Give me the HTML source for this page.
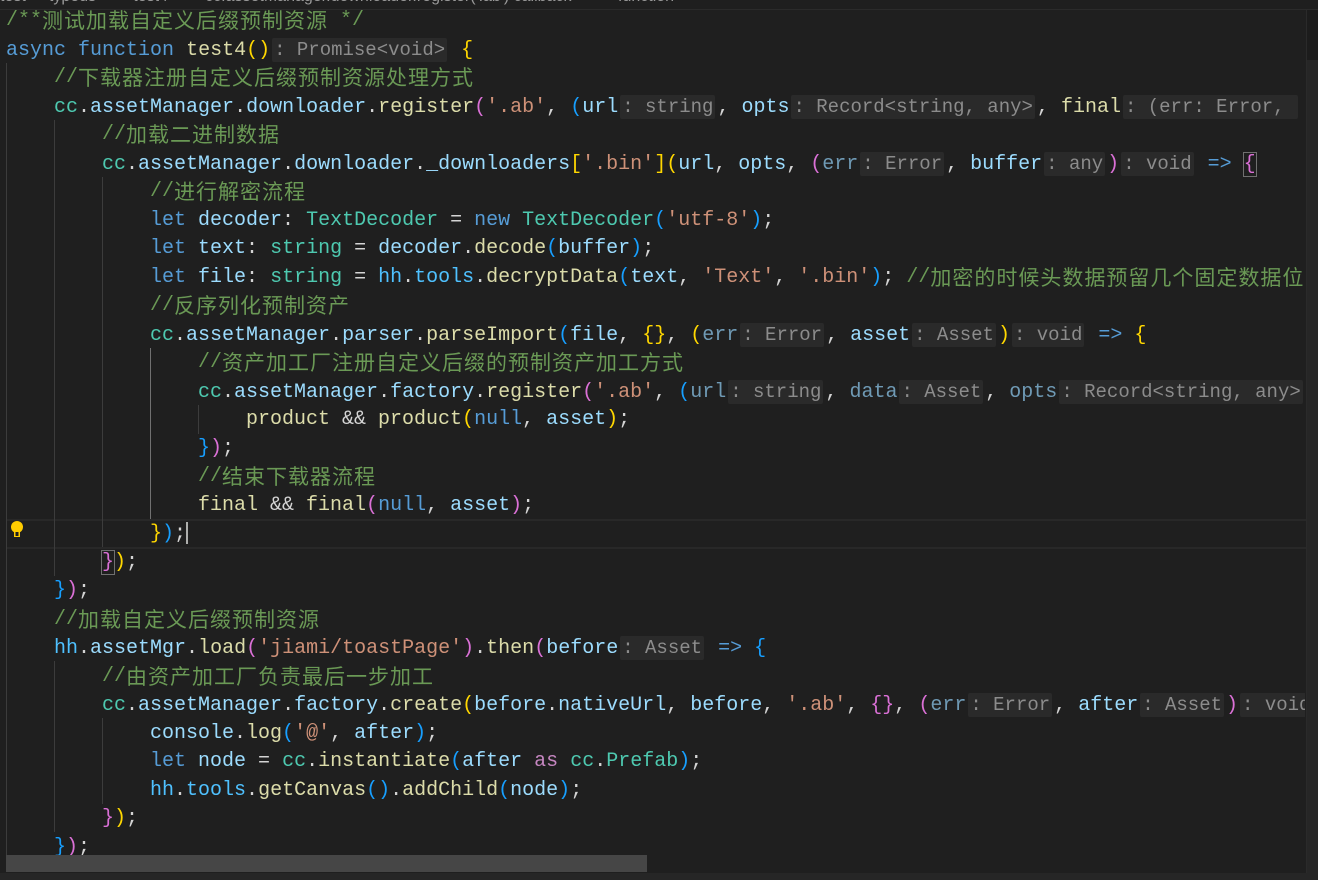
<!DOCTYPE html>
<html><head><meta charset="utf-8"><style>
html,body{margin:0;padding:0;background:#1f1f1f;width:1318px;height:880px;overflow:hidden}
#top{position:absolute;left:0;top:0;width:1318px;height:9px;background:#1f1f1f;overflow:hidden;border-bottom:1px solid #2b2b2b}
#top div{position:absolute;top:-12px;left:0;font:16px "Liberation Sans",sans-serif;color:#9a9a9a;white-space:pre}
#ed{position:absolute;left:0;top:9px;width:1305px;height:846px;overflow:hidden}
.l{position:absolute;left:6px;height:28.5px;line-height:28.5px;white-space:pre;font:20px "Liberation Mono","Noto Sans CJK SC",monospace;color:#d4d4d4}
.l span{line-height:0}
.c{color:#6a9955}
.z{font-family:"Noto Sans CJK SC",sans-serif;font-size:21px;letter-spacing:1px;position:relative;top:3px}
.k{color:#569cd6}.f{color:#dcdcaa}.v{color:#9cdcfe}.t{color:#4ec9b0}.s{color:#ce9178}.cn{color:#4fc1ff}.p{color:#c586c0}
.u{color:#6f9ab5}
.y{color:#ffd700}.m{color:#da70d6}.b{color:#179fff}
.l .h{display:inline-block;font-size:19px;line-height:24px;background:#2a2a2a;color:#8c8c8c;padding:0 2px;margin:0 2px;border-radius:2px}
.g{position:absolute;width:1px;background:#3c3c3c}
.ga{background:#707070}
.box{outline:1px solid #707070}
#cur{position:absolute;left:6px;top:519px;width:1300px;height:26px;border-top:2px solid #282828;border-bottom:2px solid #282828}
#hs{position:absolute;left:6px;top:855px;width:641px;height:17px;background:#464646}
#bot{position:absolute;left:0;top:873px;width:1318px;height:7px;background:#262626}
#vs{position:absolute;left:1306px;top:10px;width:12px;height:863px;background:#1c1c1c;border-left:1px solid #2a2a2a}
#vsl{position:absolute;left:1307px;top:60px;width:11px;height:813px;background:#262626}
</style></head><body>
<div id="top"><div>test  ›  typeds  ›  ● test4  ›  ● cc.assetManager.downloader.register('.ab') callback  ›  ● &lt;function&gt;</div></div>
<div id="cur"></div>
<div id="ed">
<div class="g" style="left:6px;top:54px;height:800px"></div>
<div class="g" style="left:54px;top:111px;height:456px"></div>
<div class="g" style="left:54px;top:652px;height:171px"></div>
<div class="g" style="left:102px;top:168px;height:370px"></div>
<div class="g" style="left:102px;top:709px;height:86px"></div>
<div class="g ga" style="left:150px;top:339px;height:171px"></div>
<div class="g" style="left:198px;top:396px;height:29px"></div>

<div class="l" style="top:0px"><span class="c">/**<span class="z">测试加载自定义后缀预制资源</span> */</span></div>
<div class="l" style="top:28.5px"><span class="k">async</span> <span class="k">function</span> <span class="f">test4</span><span class="y">()</span><span class="h">: Promise&lt;void&gt;</span> <span class="y">{</span></div>
<div class="l" style="top:57px;left:54px"><span class="c">//<span class="z">下载器注册自定义后缀预制资源处理方式</span></span></div>
<div class="l" style="top:85.5px;left:54px"><span class="t">cc</span>.<span class="v">assetManager</span>.<span class="v">downloader</span>.<span class="f">register</span><span class="m">(</span><span class="s">'.ab'</span>, <span class="b">(</span><span class="v">url</span><span class="h">: string</span>, <span class="v">opts</span><span class="h">: Record&lt;string, any&gt;</span>, <span class="f">final</span><span class="h">: (err: Error, </span></div>
<div class="l" style="top:114px;left:102px"><span class="c">//<span class="z">加载二进制数据</span></span></div>
<div class="l" style="top:142.5px;left:102px"><span class="t">cc</span>.<span class="v">assetManager</span>.<span class="v">downloader</span>.<span class="v">_downloaders</span><span class="y">[</span><span class="s">'.bin'</span><span class="y">](</span><span class="v">url</span>, <span class="v">opts</span>, <span class="m">(</span><span class="u">err</span><span class="h">: Error</span>, <span class="v">buffer</span><span class="h">: any</span><span class="m">)</span><span class="h">: void</span> <span class="k">=&gt;</span> <span class="m box">{</span></div>
<div class="l" style="top:171px;left:150px"><span class="c">//<span class="z">进行解密流程</span></span></div>
<div class="l" style="top:199.5px;left:150px"><span class="k">let</span> <span class="v">decoder</span>: <span class="t">TextDecoder</span> = <span class="k">new</span> <span class="t">TextDecoder</span><span class="b">(</span><span class="s">'utf-8'</span><span class="b">)</span>;</div>
<div class="l" style="top:228px;left:150px"><span class="k">let</span> <span class="v">text</span>: <span class="t">string</span> = <span class="v">decoder</span>.<span class="f">decode</span><span class="b">(</span><span class="v">buffer</span><span class="b">)</span>;</div>
<div class="l" style="top:256.5px;left:150px"><span class="k">let</span> <span class="v">file</span>: <span class="t">string</span> = <span class="cn">hh</span>.<span class="cn">tools</span>.<span class="f">decryptData</span><span class="b">(</span><span class="v">text</span>, <span class="s">'Text'</span>, <span class="s">'.bin'</span><span class="b">)</span>; <span class="c">//<span class="z">加密的时候头数据预留几个固定数据位</span></span></div>
<div class="l" style="top:285px;left:150px"><span class="c">//<span class="z">反序列化预制资产</span></span></div>
<div class="l" style="top:313.5px;left:150px"><span class="t">cc</span>.<span class="v">assetManager</span>.<span class="v">parser</span>.<span class="f">parseImport</span><span class="b">(</span><span class="v">file</span>, <span class="y">{}</span>, <span class="y">(</span><span class="u">err</span><span class="h">: Error</span>, <span class="v">asset</span><span class="h">: Asset</span><span class="y">)</span><span class="h">: void</span> <span class="k">=&gt;</span> <span class="y">{</span></div>
<div class="l" style="top:342px;left:198px"><span class="c">//<span class="z">资产加工厂注册自定义后缀的预制资产加工方式</span></span></div>
<div class="l" style="top:370.5px;left:198px"><span class="t">cc</span>.<span class="v">assetManager</span>.<span class="v">factory</span>.<span class="f">register</span><span class="m">(</span><span class="s">'.ab'</span>, <span class="b">(</span><span class="u">url</span><span class="h">: string</span>, <span class="u">data</span><span class="h">: Asset</span>, <span class="u">opts</span><span class="h">: Record&lt;string, any&gt;</span></div>
<div class="l" style="top:399px;left:246px"><span class="f">product</span> &amp;&amp; <span class="f">product</span><span class="y">(</span><span class="k">null</span>, <span class="v">asset</span><span class="y">)</span>;</div>
<div class="l" style="top:427.5px;left:198px"><span class="b">}</span><span class="m">)</span>;</div>
<div class="l" style="top:456px;left:198px"><span class="c">//<span class="z">结束下载器流程</span></span></div>
<div class="l" style="top:484.5px;left:198px"><span class="f">final</span> &amp;&amp; <span class="f">final</span><span class="m">(</span><span class="k">null</span>, <span class="v">asset</span><span class="m">)</span>;</div>
<div class="l" style="top:513px;left:150px"><span class="y">}</span><span class="b">)</span>;<span style="display:inline-block;width:2px;height:22px;background:#aeafad;vertical-align:middle"></span></div>
<div class="l" style="top:541.5px;left:102px"><span class="m box">}</span><span class="y">)</span>;</div>
<div class="l" style="top:570px;left:54px"><span class="b">}</span><span class="m">)</span>;</div>
<div class="l" style="top:598.5px;left:54px"><span class="c">//<span class="z">加载自定义后缀预制资源</span></span></div>
<div class="l" style="top:627px;left:54px"><span class="cn">hh</span>.<span class="v">assetMgr</span>.<span class="f">load</span><span class="m">(</span><span class="s">'jiami/toastPage'</span><span class="m">)</span>.<span class="f">then</span><span class="m">(</span><span class="v">before</span><span class="h">: Asset</span> <span class="k">=&gt;</span> <span class="b">{</span></div>
<div class="l" style="top:655.5px;left:102px"><span class="c">//<span class="z">由资产加工厂负责最后一步加工</span></span></div>
<div class="l" style="top:684px;left:102px"><span class="t">cc</span>.<span class="v">assetManager</span>.<span class="v">factory</span>.<span class="f">create</span><span class="y">(</span><span class="v">before</span>.<span class="v">nativeUrl</span>, <span class="v">before</span>, <span class="s">'.ab'</span>, <span class="m">{}</span>, <span class="m">(</span><span class="u">err</span><span class="h">: Error</span>, <span class="v">after</span><span class="h">: Asset</span><span class="m">)</span><span class="h">: void</span></div>
<div class="l" style="top:712.5px;left:150px"><span class="v">console</span>.<span class="f">log</span><span class="b">(</span><span class="s">'@'</span>, <span class="v">after</span><span class="b">)</span>;</div>
<div class="l" style="top:741px;left:150px"><span class="k">let</span> <span class="v">node</span> = <span class="t">cc</span>.<span class="f">instantiate</span><span class="b">(</span><span class="v">after</span> <span class="p">as</span> <span class="t">cc</span>.<span class="t">Prefab</span><span class="b">)</span>;</div>
<div class="l" style="top:769.5px;left:150px"><span class="cn">hh</span>.<span class="cn">tools</span>.<span class="f">getCanvas</span><span class="b">()</span>.<span class="f">addChild</span><span class="b">(</span><span class="v">node</span><span class="b">)</span>;</div>
<div class="l" style="top:798px;left:102px"><span class="m">}</span><span class="y">)</span>;</div>
<div class="l" style="top:826.5px;left:54px"><span class="b">}</span><span class="m">)</span>;</div>
</div>
<svg style="position:absolute;left:10px;top:520px" width="16" height="20" viewBox="0 0 16 20"><circle cx="7" cy="7" r="6" fill="#ffcc00"/><rect x="4" y="11" width="6" height="6" fill="#ffcc00"/><rect x="5.5" y="12" width="3" height="4" fill="#1f1f1f"/></svg>
<div id="vs"></div><div id="vsl"></div>
<div id="hs"></div>
<div id="bot"></div>
</body></html>
